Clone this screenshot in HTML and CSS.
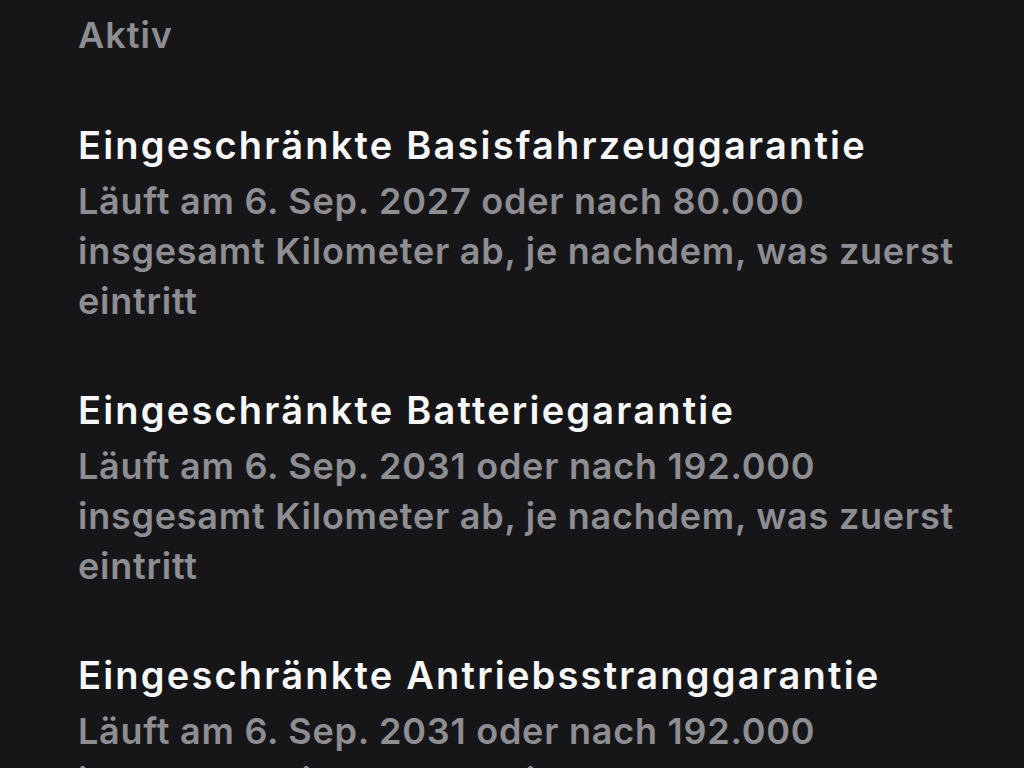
FILE: index.html
```html
<!DOCTYPE html>
<html lang="de">
<head>
<meta charset="utf-8">
<link rel="stylesheet" href="styles.css">
</head>
<body>
<main class="page">
  <div class="section-label">Aktiv</div>
  <ul class="warranty-list">
    <li class="warranty">
      <div class="warranty-title">Eingeschränkte Basisfahrzeuggarantie</div>
      <div class="warranty-desc">Läuft am 6. Sep. 2027 oder nach 80.000 insgesamt Kilometer ab, je nachdem, was zuerst eintritt</div>
    </li>
    <li class="warranty">
      <div class="warranty-title">Eingeschränkte Batteriegarantie</div>
      <div class="warranty-desc">Läuft am 6. Sep. 2031 oder nach 192.000 insgesamt Kilometer ab, je nachdem, was zuerst eintritt</div>
    </li>
    <li class="warranty">
      <div class="warranty-title">Eingeschränkte Antriebsstranggarantie</div>
      <div class="warranty-desc">Läuft am 6. Sep. 2031 oder nach 192.000 insgesamt Kilometer ab, je nachdem, was zuerst eintritt</div>
    </li>
  </ul>
</main>
</body>
</html>
```

FILE: styles.css
```css
html, body {
  margin: 0;
  padding: 0;
  background: #161619;
}
body {
  font-family: Inter, "Noto Sans", sans-serif;
  -webkit-font-smoothing: antialiased;
}
.page {
  width: 900px;
  padding: 10px 0 0 78px;
}
.section-label {
  color: #8e8e92;
  font-size: 36px;
  font-weight: 600;
  letter-spacing: 1px;
  line-height: 50px;
}
.warranty-list {
  list-style: none;
  margin: 60px 0 0;
  padding: 0;
  display: flex;
  flex-direction: column;
  gap: 59px;
}
.warranty-title {
  color: #f7f7f7;
  font-size: 38px;
  font-weight: 600;
  letter-spacing: 2.2px;
  line-height: 50px;
}
.warranty-desc {
  color: #8e8e92;
  font-size: 36px;
  font-weight: 600;
  letter-spacing: 0.75px;
  line-height: 50px;
  margin-top: 6px;
}
```
